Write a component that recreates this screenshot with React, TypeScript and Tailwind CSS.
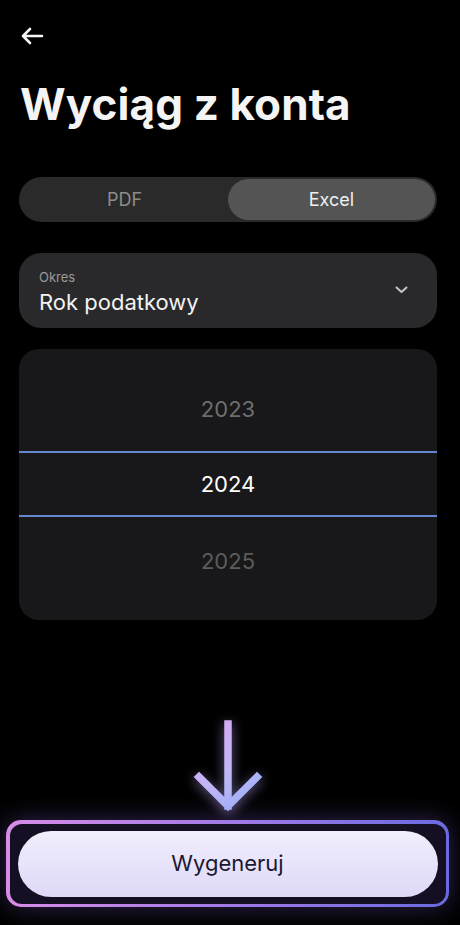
import React from "react";

export default function App() {
  return (
    <div
      className="relative w-[460px] h-[925px] bg-black overflow-hidden text-white"
      style={{ fontFamily: "Inter, 'Noto Sans', sans-serif" }}
    >
      <div className="flex flex-col pl-[19px] pr-[23px]">
        {/* back */}
        <div className="pt-[27px] pl-[1px]">
          <svg width="24" height="18" viewBox="0 0 24 18" fill="none">
            <path
              d="M22 9H3M10 2L3 9l7 7"
              stroke="#f5f5f5"
              strokeWidth="2.6"
              strokeLinecap="round"
              strokeLinejoin="round"
            />
          </svg>
        </div>

        {/* title */}
        <h1 className="mt-[33px] pl-[1px] text-[44px] leading-[52px] font-bold tracking-[0.1px] text-[#f4f4f4]">
          Wyciąg z konta
        </h1>

        {/* segmented */}
        <div className="mt-[47px] h-[45px] rounded-full bg-[#2a2a2a] p-[2px] flex">
          <div className="flex-1 flex items-center justify-center text-[18px] text-[#8c8c8c]">
            PDF
          </div>
          <div className="flex-1 flex items-center justify-center rounded-full bg-[#545454] text-[18px] text-[#f0f0f0]">
            Excel
          </div>
        </div>

        {/* select */}
        <div className="mt-[31px] h-[75px] rounded-[22px] bg-[#29292b] flex items-center justify-between pl-[20px] pr-[29px]">
          <div className="flex flex-col pt-[3px]">
            <span className="text-[13px] leading-[16px] text-[#9a9a9a]">Okres</span>
            <span className="mt-[4px] text-[22px] leading-[27px] text-[#f2f2f2]">Rok podatkowy</span>
          </div>
          <svg width="13" height="8" viewBox="0 0 13 8" fill="none" className="-mt-[2px]">
            <path d="M1.5 1.5l5 4.5 5-4.5" stroke="#c4c4c4" strokeWidth="2" strokeLinecap="round" strokeLinejoin="round" />
          </svg>
        </div>

        {/* picker */}
        <div className="mt-[21px] h-[271px] rounded-[20px] bg-[#18181a] flex flex-col overflow-hidden">
          <div className="h-[102px] flex items-end justify-center pb-[29px] text-[22px] leading-[26px] text-[#6e6e6e]">
            2023
          </div>
          <div className="h-[66px] border-y-[2.5px] border-[#6487cf] flex items-center justify-center text-[22px] leading-[26px] text-white">
            2024
          </div>
          <div className="flex-1 flex items-start justify-center pt-[31px] text-[22px] leading-[26px] text-[#5c5c5c]">
            2025
          </div>
        </div>

        {/* arrow */}
        <div className="mt-[100px] flex justify-center">
          <svg width="80" height="96" viewBox="0 0 80 96" fill="none" style={{ filter: "drop-shadow(0 3px 6px rgba(190,170,255,0.55))" }}>
            <defs>
              <linearGradient id="arr" x1="0" y1="0" x2="80" y2="96" gradientUnits="userSpaceOnUse">
                <stop offset="0" stopColor="#dca4f2" />
                <stop offset="0.5" stopColor="#c3b6f6" />
                <stop offset="1" stopColor="#8cb0fb" />
              </linearGradient>
            </defs>
            <path
              d="M40 4V86M11 57l29 29 29-29"
              stroke="url(#arr)"
              strokeWidth="7.5"
              strokeLinecap="square"
              strokeLinejoin="miter"
            />
          </svg>
        </div>
      </div>

      {/* button */}
      <div className="absolute left-[6px] right-[11px] top-[820px] h-[87px] rounded-[15px] p-[3.5px] bg-gradient-to-r from-[#d88ce8] via-[#a27ae6] to-[#6a6ae0] shadow-[0_0_24px_rgba(140,110,230,0.35)]">
        <div className="w-full h-full rounded-[12px] bg-[#150f24] flex items-center px-[8px]">
          <button className="w-full h-[66px] rounded-full bg-gradient-to-b from-[#f1eefc] to-[#dfd9f8] text-[22px] font-normal text-[#1c1830]">
            Wygeneruj
          </button>
        </div>
      </div>
    </div>
  );
}
